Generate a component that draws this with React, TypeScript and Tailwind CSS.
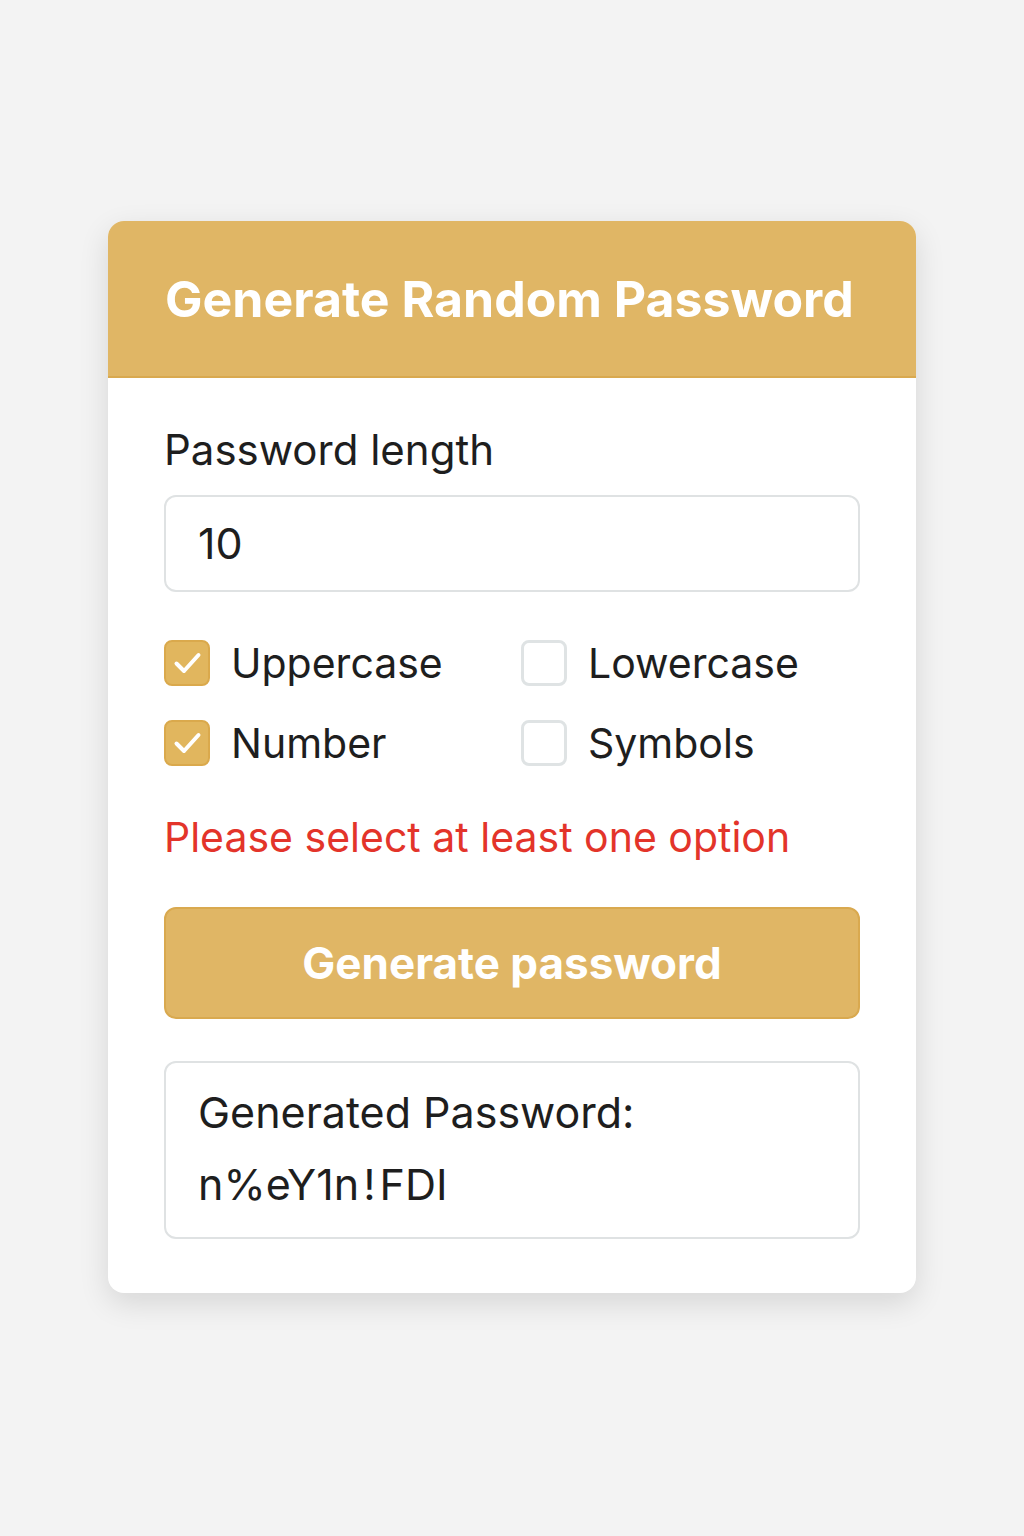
import React from "react";

function Check({ checked }: { checked: boolean }) {
  if (checked) {
    return (
      <span className="relative h-[46px] w-[46px] shrink-0 rounded-[8px] border-2 border-[#daa94c] bg-[#e1b65e]">
        <svg className="absolute left-[-2px] top-[-2px]" width="46" height="46" viewBox="0 0 46 46" fill="none" stroke="white" strokeWidth="4" strokeLinecap="round" strokeLinejoin="round">
          <path d="M12.5 23.5L20 31L34.5 15" />
        </svg>
      </span>
    );
  }
  return <span className="h-[46px] w-[46px] shrink-0 rounded-[8px] border-[3px] border-[#dfe3e4] bg-white" />;
}

function Option({ label, checked }: { label: string; checked: boolean }) {
  return (
    <label className="flex items-center gap-[21px]">
      <Check checked={checked} />
      <span className="text-[41px] leading-none text-[#1e1e1e]">{label}</span>
    </label>
  );
}

export default function App() {
  return (
    <div
      className="flex min-h-[1536px] w-full justify-center bg-[#f3f3f3] pt-[221px]"
      style={{ fontFamily: "Inter, 'Noto Sans', sans-serif" }}
    >
      <div className="h-fit w-[808px] overflow-hidden rounded-[16px] bg-white shadow-[0_10px_30px_rgba(0,0,0,0.12)]">
        <div className="flex h-[157px] items-center border-b-2 border-[#d9a94f] bg-[#e0b665] px-[57px]">
          <h1 className="text-[50px] font-bold leading-none text-white">Generate Random Password</h1>
        </div>
        <div className="px-[56px] pb-[54px] pt-[51px]">
          <div className="text-[42px] leading-none text-[#1e1e1e]">Password length</div>
          <div className="mt-[24px] flex h-[97px] items-center rounded-[12px] border-2 border-[#dfe2e3] px-[32px] text-[43px] leading-none text-[#1e1e1e]">
            10
          </div>
          <div className="mt-[48px] grid grid-cols-[357px_1fr] gap-y-[34px]">
            <Option label="Uppercase" checked />
            <Option label="Lowercase" checked={false} />
            <Option label="Number" checked />
            <Option label="Symbols" checked={false} />
          </div>
          <div className="mt-[51px] text-[41px] leading-none text-[#e3342a]">Please select at least one option</div>
          <button className="mt-[49px] flex h-[112px] w-full items-center justify-center rounded-[12px] border-2 border-[#d9a94f] bg-[#e0b665] text-[44px] font-bold leading-none text-white">
            Generate password
          </button>
          <div className="mt-[42px] rounded-[12px] border-2 border-[#dfe2e3] px-[32px] pb-[31px] pt-[28px] text-[43px] leading-none text-[#1e1e1e]">
            <div>Generated Password:</div>
            <div className="mt-[29px]">
              n%eY1n<span className="mx-[4px]">!</span>FDI
            </div>
          </div>
        </div>
      </div>
    </div>
  );
}
